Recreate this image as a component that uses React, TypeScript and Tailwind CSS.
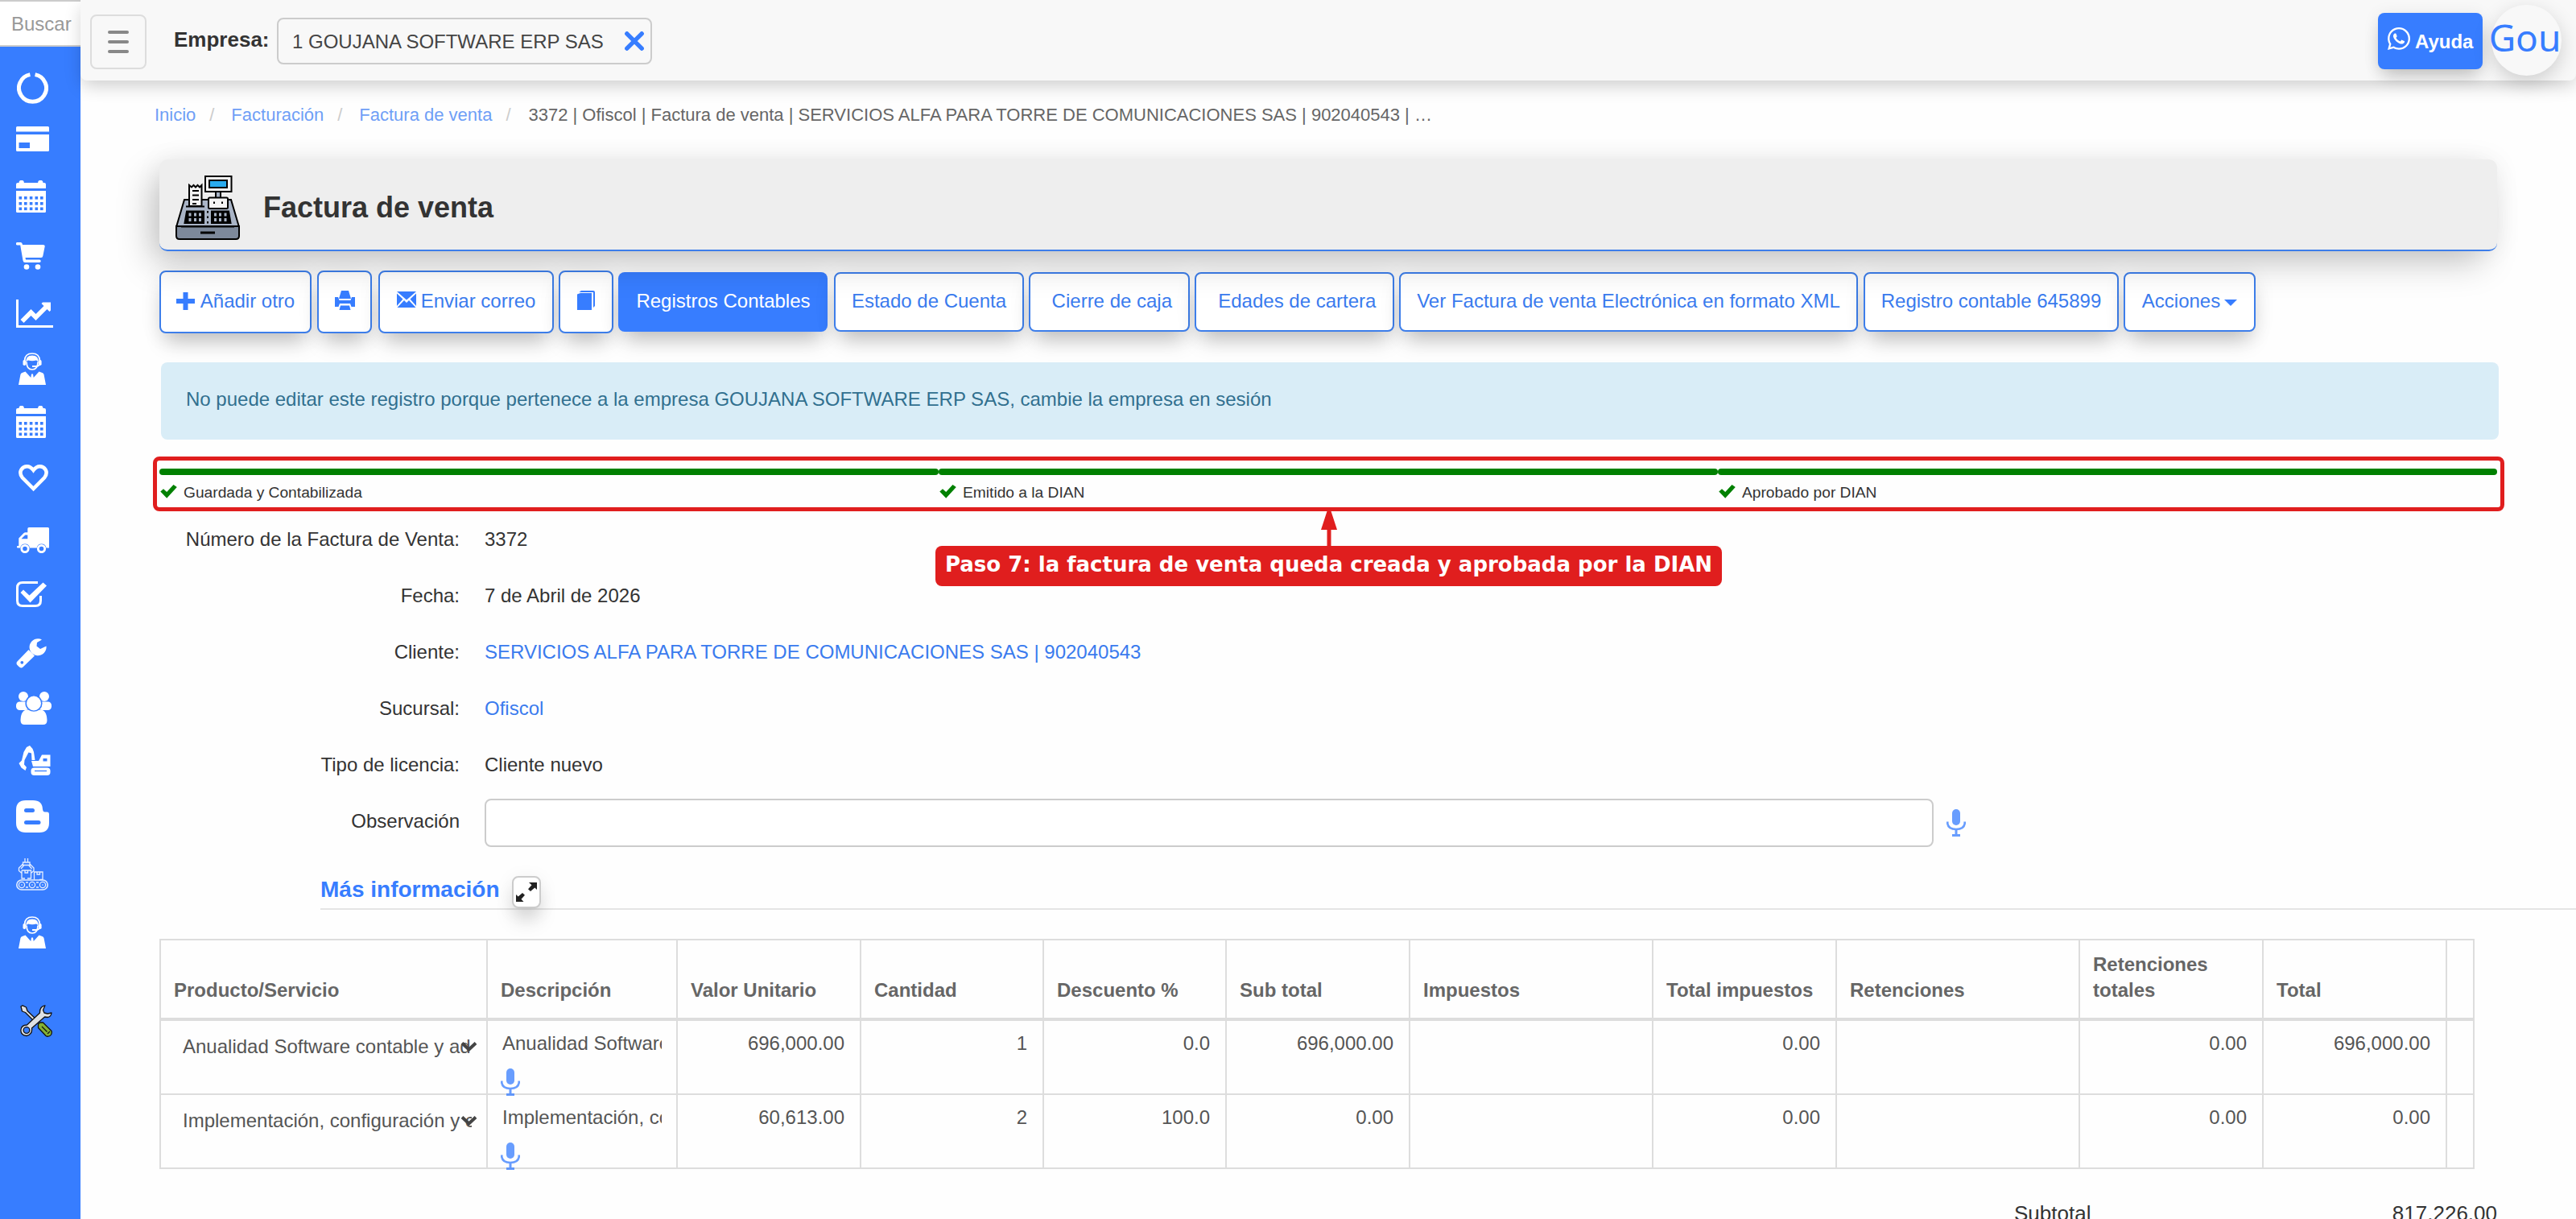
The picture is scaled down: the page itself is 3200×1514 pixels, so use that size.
import React from "react";
import { FaWhatsapp } from "react-icons/fa";

/* ---------- Sidebar icons ---------- */

const CircleNotch = () => (
  <svg viewBox="0 0 39 39" className="mt-[32px] ml-[21px] h-[39px] w-[39px] shrink-0">
    <path d="M22.6 2.6A17 17 0 1 1 16.4 2.6" fill="none" stroke="#fff" strokeWidth="5" />
  </svg>
);

const Card = () => (
  <svg viewBox="0 0 41 31" className="mt-[28px] ml-[20px] h-[31px] w-[41px] shrink-0" fill="#fff">
    <path d="M1.500 0h38A1.500 1.500 0 0 1 41 1.500V6.500H0V1.500A1.500 1.500 0 0 1 1.500 0Z" />
    <path fillRule="evenodd" d="M0 10H41V29.500A1.500 1.500 0 0 1 39.500 31H1.500A1.500 1.500 0 0 1 0 29.500ZM3.500 20V27H17V20Z" />
  </svg>
);

const Calendar = ({ className }: { className: string }) => (
  <svg viewBox="0 0 37 40" className={className} fill="#fff">
    <path d="M0 10V5a2 2 0 0 1 2-2h1.500a3.200 3.200 0 0 1 6.400 0h17.200a3.200 3.200 0 0 1 6.400 0H35a2 2 0 0 1 2 2v5Z" />
    <path d="M0 13H37V38.500A1.500 1.500 0 0 1 35.500 40H1.500A1.500 1.500 0 0 1 0 38.500Z" />
    {[20, 27, 33.5].map((y) =>
      [3.5, 10, 16.8, 23.5, 30].map((x) => <rect key={`${x}-${y}`} x={x} y={y} width="3.6" height="3.6" fill="#377dff" />)
    )}
  </svg>
);

const Cart = () => (
  <svg viewBox="0 0 36 34" className="mt-[37px] ml-[20px] h-[34px] w-[36px] shrink-0" fill="#fff">
    <path d="M1.500 0H5.500Q7.500 0 8 3H33.500Q36 3 35.700 5L33.300 17Q33 19 31 19H11.500L12 21.500H29A1.700 1.700 0 0 1 29 25H11Q9 25 8.500 22.500L5.200 3.500H1.500A1.700 1.700 0 0 1 1.500 0Z" />
    <circle cx="13" cy="30.500" r="3.300" />
    <circle cx="27" cy="30.500" r="3.300" />
  </svg>
);

const Chart = () => (
  <svg viewBox="0 0 46 35" className="mt-[37px] ml-[20px] h-[35px] w-[46px] shrink-0" fill="#fff">
    <path d="M0 0H3V32H46V35H0Z" />
    <path d="M5.500 25 18.500 12 24.500 18 34.500 8 31.500 5 33 3.500H43V13.500L41.500 15 38.500 12 24.500 26 18.500 20 9.500 29Z" />
  </svg>
);

const Agent = ({ className }: { className: string }) => (
  <svg viewBox="0 0 34 40" className={className}>
    <path d="M0 40 2.500 27Q3 25.500 4.500 25L8.500 23.500 15.300 31 16 26.500H18L18.700 31 25.500 23.500 29.500 25Q31 25.500 31.500 27L34 40Z" fill="#fff" />
    <path d="M10 11.500Q10 21 17 21T24 11.500" fill="none" stroke="#fff" strokeWidth="1.700" />
    <path d="M9.500 12.500Q8.500 3.500 17 3.500T24.500 12.500Q23.500 9.500 22 9.500 17 11 12 9.500 10.500 9.500 9.500 12.500Z" fill="#fff" />
    <path d="M7.500 10Q8 1 17 1T26.500 10" fill="none" stroke="#fff" strokeWidth="1.700" />
    <rect x="5.500" y="9" width="3.600" height="7" rx="1.800" fill="#fff" />
    <rect x="25" y="9" width="3.600" height="7" rx="1.800" fill="#fff" />
    <path d="M26 15Q24.500 17.500 17 17" fill="none" stroke="#fff" strokeWidth="2" />
  </svg>
);

const Heart = () => (
  <svg viewBox="0 0 37 34" className="mt-[33px] ml-[23px] h-[34px] w-[37px] shrink-0">
    <path d="M18.500 30 4.600 16Q.8 11 3.500 6.200 6 2.300 10.500 2.300 15 2.300 18.500 7 22 2.300 26.500 2.300 31 2.300 33.500 6.200 36.200 11 32.400 16Z" fill="none" stroke="#fff" strokeWidth="4.500" />
  </svg>
);

const Truck = () => (
  <svg viewBox="0 0 40 32" className="mt-[44px] ml-[21px] h-[32px] w-[40px] shrink-0">
    <path d="M15 0H38.500A1.500 1.500 0 0 1 40 1.500V25.500H36.500A6 6 0 0 0 24.700 25.500H16A6 6 0 0 0 4.200 25.500H1A1 1 0 0 1 1 23H2.300V13.500L8.300 7.200Q9.300 6.300 10.800 6.300H13.300V1.700Q13.300 0 15 0ZM5.500 14.300H13.300V9.500H10.300Z" fill="#fff" fillRule="evenodd" />
    <circle cx="10" cy="26.500" r="4.200" fill="none" stroke="#fff" strokeWidth="2.800" />
    <circle cx="30.500" cy="26.500" r="4.200" fill="none" stroke="#fff" strokeWidth="2.800" />
  </svg>
);

const CheckBox = () => (
  <svg viewBox="0 0 38 32" className="mt-[35px] ml-[20px] h-[32px] w-[38px] shrink-0">
    <path d="M27 1.500H8Q1.500 1.500 1.500 8V24Q1.500 30.500 8 30.500H24Q30.500 30.500 30.500 24V18" fill="none" stroke="#fff" strokeWidth="3" />
    <path d="M5.500 14 9 10.500 16.500 17.500 33.500 1.500 38 5.500 17.500 26.500Z" fill="#fff" />
  </svg>
);

const Wrench = () => (
  <svg viewBox="0 0 38 37" className="mt-[39px] ml-[20px] h-[37px] w-[38px] shrink-0">
    <path d="M32 1.500A10.500 10.500 0 1 0 37.500 9.500L30 13 25.500 9.500 26 5Z" fill="#fff" />
    <path d="M15.500 14 23 21.500 8.500 35.500Q6 37.500 3.500 35L1.500 33Q-.5 30.500 1.500 28.500Z" fill="#fff" />
    <circle cx="7.300" cy="29.800" r="1.900" fill="#377dff" />
  </svg>
);

const Users = () => (
  <svg viewBox="0 0 44 41" className="mt-[29px] ml-[20px] h-[41px] w-[44px] shrink-0" fill="#fff">
    <circle cx="9" cy="6" r="6" />
    <circle cx="35" cy="6" r="6" />
    <rect x="0" y="12.500" width="16" height="10.500" rx="4.500" />
    <rect x="28" y="12.500" width="16" height="10.500" rx="4.500" />
    <circle cx="22" cy="14.500" r="9.800" stroke="#377dff" strokeWidth="1.600" />
    <path d="M15 22.500Q22 27 29 22.500 38 22 38.500 35.500 38.500 41 33.500 41H10.500Q5.500 41 5.500 35.500 6 22 15 22.500Z" />
  </svg>
);

const Excavator = () => (
  <svg viewBox="0 0 40 37" className="mt-[26px] ml-[23px] h-[37px] w-[40px] shrink-0" fill="#fff">
    <path d="M10 2 14 0 17.500 4 19 8 20.500 18H16.500L16 9.500 12.500 8.500 7.500 18 7 23.500 10 27 8.500 31 3.500 27.500 .5 22 4 18.500 6.500 8Z" />
    <path fillRule="evenodd" d="M16 19H25L29 11.500H39.500V26H18ZM30.500 16V19.500H35.500V16Z" />
    <rect x="15.500" y="27.500" width="24" height="9.500" rx="4" />
    <path d="M20 31.500H35" stroke="#377dff" strokeWidth="1.300" />
  </svg>
);

const Blogger = () => (
  <svg viewBox="0 0 41 40" className="mt-[31px] ml-[20px] h-[40px] w-[41px] shrink-0">
    <path d="M12 0H21Q32.500 0 33 11 33.300 14.500 36 14.500H38.500Q41 14.500 41 17.500V28Q41 40 29 40H12Q0 40 0 28V12Q0 0 12 0Z" fill="#fff" />
    <rect x="10" y="10" width="13" height="5" rx="2.500" fill="#377dff" />
    <rect x="10" y="25" width="20.500" height="5" rx="2.500" fill="#377dff" />
  </svg>
);

const Conveyor = () => (
  <svg viewBox="0 0 40 40" className="mt-[32px] ml-[20px] h-[40px] w-[40px] shrink-0" fill="none" stroke="#e4edff" strokeWidth="1.300">
    <path d="M11 0V5M14.500 0V5M8.500 5H17V8.500H8.500ZM8.500 7 3.500 12V15.500L7 18.500M17 7 22 12V15.500L18.500 18.500M9.500 9 6 13M16 9 19.500 13M7 15H18.500V25H14M7 15V25H11M11 15V18H14.500V15M22.500 26.500V17H33V26.500H29M26 17V20H29.500V17" />
    <rect x=".8" y="27" width="38.400" height="12" rx="6" strokeWidth="1.600" />
    <circle cx="7" cy="33" r="3.600" />
    <circle cx="20" cy="33" r="3.600" />
    <circle cx="33" cy="33" r="3.600" />
    <path d="M7 32.300V33.700M20 32.300V33.700M33 32.300V33.700M12 30H15M12 36H15M25 30H28M25 36H28" />
  </svg>
);

const Tools = () => (
  <svg viewBox="0 0 40 40" className="mt-[70px] ml-[25px] h-[40px] w-[40px] shrink-0" stroke="#111" strokeWidth="1.300" strokeLinejoin="round">
    <path d="M1 2 3 .8 7.500 3 9 7.500 21 19 18.500 21.500 6.500 9.500 2.500 8Z" fill="#dfe1e4" />
    <path d="M24.500 22 28.500 22 39 32.500Q40 37 37 38.500 34 40 32 38.500L22.500 28.500V24Z" fill="#84b135" />
    <path d="M27 27 33.500 33.500M34 36 37 33" fill="none" />
    <path d="M39 10Q38.500 15 34 15.500L30.500 15 14.500 29Q15.500 37 8 38.500 1 38 .8 31.500 1.500 25 8.500 25L24.500 10Q24 2 31 .8L28.500 6.500 30 10 34 11Z" fill="#dfe1e4" />
    <circle cx="8" cy="31.500" r="3.800" fill="#377dff" />
  </svg>
);

/* ---------- Page icons ---------- */

const Register = () => (
  <svg viewBox="0 0 80 80" className="h-[80px] w-[80px] shrink-0" stroke="#000" strokeWidth="2">
    <path d="M11 30H69L79 64H1Z" fill="#a9b4c6" />
    <path d="M1 63H79V75Q79 79 75 79H5Q1 79 1 75Z" fill="#7d899b" />
    <path d="M7 63.500H73" />
    <rect x="50" y="20" width="6" height="8" fill="#a9b4c6" />
    <rect x="37" y="1" width="32.500" height="19" fill="#f4f4f4" />
    <rect x="42" y="6" width="22" height="9" fill="#29abee" />
    <rect x="41" y="27.500" width="24" height="13.500" rx="1.500" fill="#f4f4f4" />
    <path d="M48 32.500V35M58 32.500V35" />
    <path d="M17 38V12L20 14.500 22.500 12 25 14.500 27.500 12 30 14.500 32.500 12V38Z" fill="#f4f4f4" />
    <path d="M13 38.500H36M21 19H29M21 24.500H29M21 30H29M21 35H26" />
    <path d="M14 44.500H35V59H11.500ZM45 44.500H66L68.500 59H45Z" fill="#000" />
    <path d="M18 46.500V57M24.500 46.500V57M30.500 46.500V57M49.500 46.500V57M55.500 46.500V57M62 46.500V57" stroke="#a9b4c6" strokeWidth="3" strokeDasharray="4 2.500" />
    <path d="M40 44V60" strokeDasharray="2.500 4" />
    <path d="M31 71H49" strokeWidth="3" />
  </svg>
);

const Mic = ({ className }: { className: string }) => (
  <svg viewBox="0 0 24 34" className={className}>
    <rect x="7" y="0" width="10" height="20" rx="5" fill="#377dff" />
    <path d="M1.300 15.500V18Q2.500 25 12 25T22.700 18V15.500" fill="none" stroke="#377dff" strokeWidth="2.600" />
    <path d="M10.500 25H13.500V31H17V34H7V31H10.500Z" fill="#377dff" />
  </svg>
);

const Chevron = () => (
  <svg viewBox="0 0 21 14" className="absolute top-[25px] right-[11px] h-[14px] w-[21px]">
    <path d="M2 2.500 10.500 10.500 19 2.500" fill="none" stroke="#444" strokeWidth="4" />
  </svg>
);

const StatusCheck = () => (
  <svg viewBox="0 0 21 17" className="h-[17px] w-[21px]">
    <path d="M.3 8.500 4 5.300 8.200 9 16.500 0 20.800 3 8.200 16.800Z" fill="#008000" />
  </svg>
);

/* ---------- Pieces ---------- */

const BTN_SHADOW = "shadow-[0_18px_26px_-8px_rgba(0,0,0,0.22),0_4px_28px_rgba(0,0,0,0.07)]";
const BTN = `flex shrink-0 items-center justify-center rounded-[8px] border-2 border-[#3d7eea] bg-white pb-[2px] whitespace-pre text-[#3a7bee] ${BTN_SHADOW}`;

const Step = ({ label }: { label: string }) => (
  <div className="flex w-[968px] flex-col">
    <div className="h-[8px] rounded-[4px] bg-[#008000]" />
    <div className="flex h-[45px] items-start gap-[8px] pt-[8px] pl-[1px]">
      <div className="pt-[4px]">
        <StatusCheck />
      </div>
      <span className="text-[19.2px] leading-[28px]">{label}</span>
    </div>
  </div>
);

const Field = ({ label, value, link }: { label: string; value: string; link?: boolean }) => (
  <div className="flex h-[70px] items-center gap-[30px]">
    <span className="w-[373px] text-right">{label}</span>
    <span className={link ? "pl-px text-[#3a7bee]" : "pl-px"}>{value}</span>
  </div>
);

const GRID = "grid grid-cols-[406px_236px_228px_227px_227px_228px_302px_228px_302px_228px_228px_34px]";

const HEADERS = [
  "Producto/Servicio",
  "Descripción",
  "Valor Unitario",
  "Cantidad",
  "Descuento %",
  "Sub total",
  "Impuestos",
  "Total impuestos",
  "Retenciones",
  "Retenciones totales",
  "Total",
  "",
];

const ROWS = [
  {
    product: "Anualidad Software contable y ad",
    description: "Anualidad Software",
    cells: ["696,000.00", "1", "0.0", "696,000.00", "", "0.00", "", "0.00", "696,000.00", ""],
  },
  {
    product: "Implementación, configuración y c",
    description: "Implementación, co",
    cells: ["60,613.00", "2", "100.0", "0.00", "", "0.00", "", "0.00", "0.00", ""],
  },
];

const Slash = () => <span className="w-[44px] pl-[17px] text-[#ccc]">/</span>;

export default function App() {
  return (
    <div className="flex h-[1514px] w-[3200px] overflow-hidden bg-[#fefefe] font-['Liberation_Sans',Arial,sans-serif] text-[24px] leading-[32px] text-[#333]">
      {/* Sidebar */}
      <aside className="flex w-[100px] shrink-0 flex-col bg-[#377dff]">
        <div className="flex h-[58px] shrink-0 items-center border-y-2 border-[#ccc] bg-white pt-[2px] pl-[14px] text-[#999]">Buscar</div>
        <CircleNotch />
        <Card />
        <Calendar className="mt-[36px] ml-[20px] h-[40px] w-[37px] shrink-0" />
        <Cart />
        <Chart />
        <Agent className="mt-[31px] ml-[23px] h-[40px] w-[34px] shrink-0" />
        <Calendar className="mt-[26px] ml-[20px] h-[40px] w-[37px] shrink-0" />
        <Heart />
        <Truck />
        <CheckBox />
        <Wrench />
        <Users />
        <Excavator />
        <Blogger />
        <Conveyor />
        <Agent className="mt-[32px] ml-[23px] h-[40px] w-[34px] shrink-0" />
        <Tools />
      </aside>

      <div className="flex w-[3100px] shrink-0 flex-col">
        {/* Top bar */}
        <header className="relative z-20 flex h-[100px] shrink-0 items-center rounded-b-[8px] bg-[#f8f8f8] shadow-[0_8px_22px_-2px_rgba(0,0,0,0.2)]">
          <div className="mt-[4px] ml-[12px] flex h-[68px] w-[70px] flex-col items-center justify-center gap-[8px] rounded-[8px] border-2 border-[#ddd]">
            <div className="h-[4px] w-[26px] rounded-[2px] bg-[#888]" />
            <div className="h-[4px] w-[26px] rounded-[2px] bg-[#888]" />
            <div className="h-[4px] w-[26px] rounded-[2px] bg-[#888]" />
          </div>
          <span className="-mt-[2px] ml-[34px] w-[128px] text-[26px] font-bold">Empresa:</span>
          <div className="mt-[2px] flex h-[58px] w-[466px] items-center justify-between rounded-[8px] border-2 border-[#ccc] pr-[8px] pl-[17px]">
            <span className="pt-[2px] text-[#444]">1 GOUJANA SOFTWARE ERP SAS</span>
            <svg viewBox="0 0 24 24" className="h-[24px] w-[24px]">
              <path d="M2.800 2.800 21.200 21.200M21.200 2.800 2.800 21.200" stroke="#377dff" strokeWidth="5.400" strokeLinecap="round" />
            </svg>
          </div>
          <div className="mt-[2px] ml-auto flex h-[70px] w-[130px] items-center gap-[6px] rounded-[8px] bg-[#377dff] pl-[12px] font-bold text-white shadow-[0_14px_22px_-6px_rgba(0,0,0,0.2),0_2px_20px_rgba(0,0,0,0.08)]">
            <FaWhatsapp className="-mt-[6px] h-[32px] w-[28px] shrink-0" />
            <span className="pt-[2px]">Ayuda</span>
          </div>
          <div className="mr-[18px] ml-[11px] flex h-[88px] w-[87px] items-center justify-center rounded-full bg-[#f8f8f8] pr-[4px] pb-[8px] font-['Noto_Sans',sans-serif] text-[46px] text-[#377dff] shadow-[0_8px_24px_rgba(0,0,0,0.17)]">
            Gou
          </div>
        </header>

        <main className="flex w-[3100px] flex-col">
          <nav className="flex h-[98px] shrink-0 items-start pt-[27px] pl-[92px] text-[22px] text-[#6f9ff6]">
            <span>Inicio</span>
            <Slash />
            <span>Facturación</span>
            <Slash />
            <span>Factura de venta</span>
            <Slash />
            <span className="pl-px text-[#666]">
              3372 | Ofiscol | Factura de venta | SERVICIOS ALFA PARA TORRE DE COMUNICACIONES SAS | 902040543 | …
            </span>
          </nav>

          <section className="pointer-events-none relative z-10 ml-[98px] flex h-[114px] w-[2904px] shrink-0 items-center rounded-[10px] border-b-2 border-[#3d7eea] bg-[#eee] pl-[20px] shadow-[-14px_18px_44px_-4px_rgba(0,0,0,0.22),0_0_34px_rgba(0,0,0,0.06)]">
            <div className="pt-[7px]">
              <Register />
            </div>
            <h1 className="ml-[29px] pt-[8px] text-[36px] font-bold">Factura de venta</h1>
          </section>

          {/* Toolbar */}
          <div className="mt-[24px] ml-[98px] flex h-[78px] shrink-0 items-center">
            <div className={`${BTN} mr-[7px] h-[78px] w-[189px] gap-[7px]`}>
              <svg viewBox="0 0 23 22" className="h-[22px] w-[23px]" fill="#377dff">
                <path d="M8.500 0H14.500V8H23V14H14.500V22H8.500V14H0V8H8.500Z" />
              </svg>
              <span>Añadir otro</span>
            </div>
            <div className={`${BTN} mr-[8px] h-[78px] w-[68px]`}>
              <svg viewBox="0 0 25 24" className="mb-[2px] h-[24px] w-[25px]" fill="#377dff">
                <path d="M8 0H17L20 10H5ZM0 8H4L5.500 12H19.500L21 8H25V20H20.500L19 16H6L4.500 20H0ZM7 18.500H18L19.500 24H5.500Z" />
              </svg>
            </div>
            <div className={`${BTN} mr-[6px] h-[78px] w-[218px] gap-[6px]`}>
              <svg viewBox="0 0 24 20" className="mb-[4px] h-[20px] w-[24px]" fill="#377dff">
                <path d="M0 0H24L12 10.500ZM0 2.500 7.500 9.500 0 18ZM24 2.500 16.500 9.500 24 18ZM9 11 12 14 15 11 23.500 20H.5Z" />
              </svg>
              <span>Enviar correo</span>
            </div>
            <div className={`${BTN} mr-[6px] h-[78px] w-[68px]`}>
              <svg viewBox="0 0 22 24" className="mb-[2px] h-[24px] w-[22px]" fill="#377dff">
                <path d="M0 4.500 4 3H18V24H0Z" />
                <path d="M2.500 2 5 0H20Q22 0 22 2V19L20 21V2Z" />
              </svg>
            </div>
            <div className={`mr-[8px] flex h-[74px] w-[260px] items-center justify-center rounded-[8px] bg-[#377dff] pb-[2px] pl-px text-white ${BTN_SHADOW}`}>
              Registros Contables
            </div>
            <div className={`${BTN} mr-[6px] h-[74px] w-[236px]`}>Estado de Cuenta</div>
            <div className={`${BTN} mr-[6px] h-[74px] w-[200px]`}>{" Cierre de caja"}</div>
            <div className={`${BTN} mr-[6px] h-[74px] w-[248px]`}>{" Edades de cartera"}</div>
            <div className={`${BTN} mr-[7px] h-[74px] w-[570px]`}>Ver Factura de venta Electrónica en formato XML</div>
            <div className={`${BTN} mr-[6px] h-[74px] w-[317px]`}>Registro contable 645899</div>
            <div className={`${BTN} h-[74px] w-[164px] gap-[5px]`}>
              <span>Acciones</span>
              <svg viewBox="0 0 16 8" className="mt-[4px] h-[8px] w-[16px]" fill="#377dff">
                <path d="M0 0H16L8 8Z" />
              </svg>
            </div>
          </div>

          <div className="mt-[36px] ml-[100px] flex h-[96px] w-[2904px] shrink-0 items-center rounded-[8px] bg-[#d9edf7] pb-[5px] pl-[31px] text-[#31708f]">
            No puede editar este registro porque pertenece a la empresa GOUJANA SOFTWARE ERP SAS, cambie la empresa en sesión
          </div>

          {/* Progress steps with callout */}
          <div className="relative mt-[36px] ml-[98px] flex w-[2904px] shrink-0">
            <Step label="Guardada y Contabilizada" />
            <Step label="Emitido a la DIAN" />
            <Step label="Aprobado por DIAN" />
            <div className="absolute -top-[15px] -left-[8px] h-[68px] w-[2921px] rounded-[8px] border-[5px] border-[#e01e1e]" />
            <div className="absolute top-[53px] left-[964px] flex w-[977px] flex-col items-center">
              <svg viewBox="0 0 20 43" className="h-[43px] w-[20px]" fill="#e01e1e">
                <path d="M7.500 0H12.500L20 23H12.500V43H7.500V23H0Z" />
              </svg>
              <div className="flex h-[50px] w-full items-center justify-center rounded-[8px] bg-[#e01e1e] pb-[5px] font-['DejaVu_Sans',sans-serif] text-[26px] font-bold whitespace-nowrap text-white">
                Paso 7: la factura de venta queda creada y aprobada por la DIAN
              </div>
            </div>
          </div>

          {/* Invoice fields */}
          <div className="flex shrink-0 flex-col pl-[98px]">
            <Field label="Número de la Factura de Venta:" value="3372" />
            <Field label="Fecha:" value="7 de Abril de 2026" />
            <Field label="Cliente:" value="SERVICIOS ALFA PARA TORRE DE COMUNICACIONES SAS | 902040543" link />
            <Field label="Sucursal:" value="Ofiscol" link />
            <Field label="Tipo de licencia:" value="Cliente nuevo" />
            <div className="flex h-[70px] items-start">
              <span className="w-[373px] pt-[19px] text-right">Observación</span>
              <div className="mt-[7px] ml-[31px] h-[60px] w-[1800px] rounded-[8px] border-2 border-[#ccc] bg-white" />
              <Mic className="mt-[20px] ml-[16px] h-[34px] w-[24px] opacity-75" />
            </div>
          </div>

          <div className="ml-[298px] flex h-[75px] shrink-0 items-start border-b-2 border-[#e5e5e5]">
            <h2 className="w-[222px] pt-[34px] text-[28px] font-bold whitespace-nowrap text-[#377dff]">Más información</h2>
            <div className="mt-[33px] ml-[16px] flex h-[40px] w-[36px] items-center justify-center rounded-[8px] border-2 border-[#ccc] bg-white shadow-[0_18px_26px_-6px_rgba(0,0,0,0.22),0_4px_24px_rgba(0,0,0,0.07)]">
              <svg viewBox="0 0 26 24" className="h-[24px] w-[26px]" fill="#222">
                <path d="M16 0H26V9L23.300 6.500 18 11 15 8.200 19.500 3.200ZM0 15 2.700 17.500 8 13 11 15.800 6.500 20.800 9.500 24H0Z" />
              </svg>
            </div>
          </div>

          {/* Items */}
          <div className="mt-[36px] ml-[98px] flex w-[2876px] shrink-0 flex-col border-t-2 border-r-2 border-[#ddd]">
            <div className={`${GRID} h-[100px] border-b-4 border-[#ddd] font-bold text-[#666]`}>
              {HEADERS.map((h, i) => (
                <div key={i} className="flex items-end border-l-2 border-[#ddd] pr-[16px] pb-[18px] pl-[16px]">
                  {h}
                </div>
              ))}
            </div>
            {ROWS.map((r) => (
              <div key={r.product} className={`${GRID} h-[92px] border-b-2 border-[#ddd] text-[#555]`}>
                <div className="relative border-l-2 border-[#ddd] pt-[16px] pl-[27px]">
                  <div className="w-[359px] overflow-hidden whitespace-nowrap">{r.product}</div>
                  <Chevron />
                </div>
                <div className="flex h-[90px] flex-col border-l-2 border-[#ddd] pt-[12px] pl-[16px]">
                  <div className="ml-[2px] w-[198px] shrink-0 overflow-hidden whitespace-nowrap">{r.description}</div>
                  <Mic className="mt-[15px] h-[34px] w-[24px] shrink-0 opacity-75" />
                </div>
                {r.cells.map((c, i) => (
                  <div key={i} className="border-l-2 border-[#ddd] pt-[12px] pr-[19px] text-right">
                    {c}
                  </div>
                ))}
              </div>
            ))}
          </div>

          <div className="mt-[39px] ml-[2402px] flex w-[600px] shrink-0 justify-between text-[26px]">
            <span>Subtotal</span>
            <span>817,226.00</span>
          </div>
        </main>
      </div>
    </div>
  );
}
